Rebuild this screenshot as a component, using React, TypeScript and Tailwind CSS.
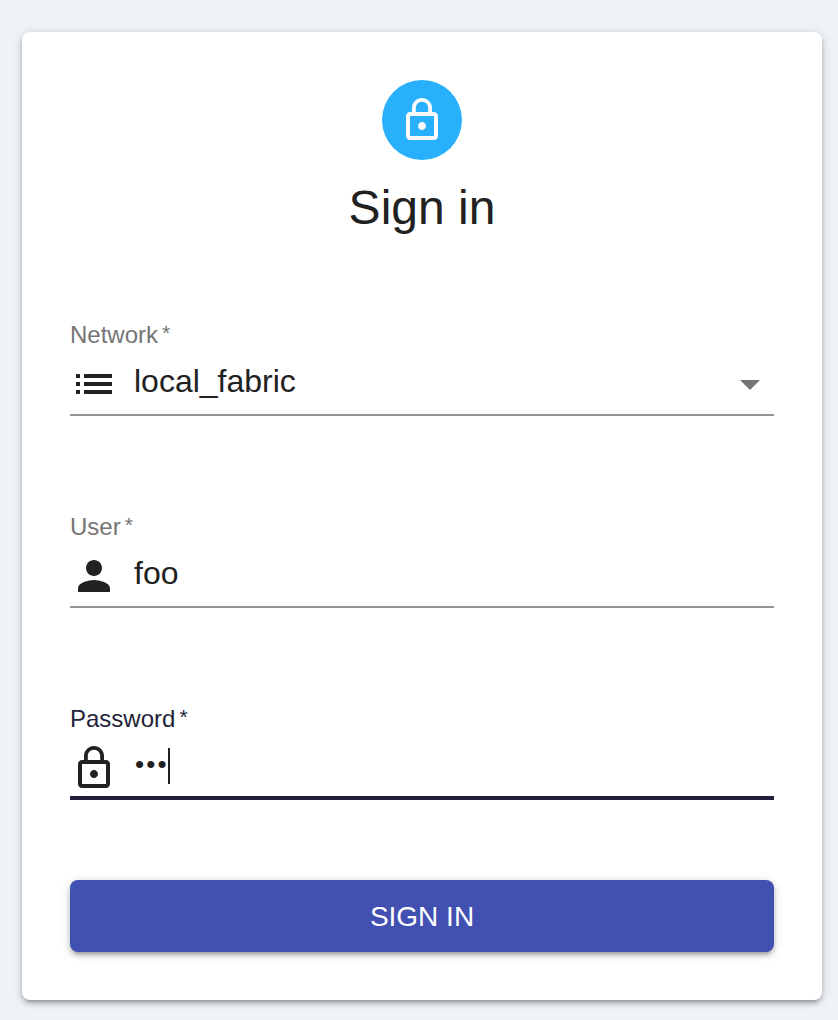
import type { ReactNode } from "react";

const LOCK =
  "M12 17c1.1 0 2-.9 2-2s-.9-2-2-2-2 .9-2 2 .9 2 2 2zm6-9h-1V6c0-2.76-2.24-5-5-5S7 3.24 7 6v2H6c-1.1 0-2 .9-2 2v10c0 1.1.9 2 2 2h12c1.1 0 2-.9 2-2V10c0-1.1-.9-2-2-2zM8.9 6c0-1.71 1.39-3.1 3.1-3.1s3.1 1.39 3.1 3.1v2H8.9V6zM18 20H6V10h12v10z";
const LIST =
  "M3 9h2V7H3v2zm0 4h2v-2H3v2zm0 4h2v-2H3v2zM7 7v2h14V7H7zm0 6h14v-2H7v2zm0 4h14v-2H7v2z";
const PERSON =
  "M12 12c2.21 0 4-1.79 4-4s-1.79-4-4-4-4 1.79-4 4 1.79 4 4 4zm0 2c-2.67 0-8 1.34-8 4v2h16v-2c0-2.66-5.33-4-8-4z";

function Icon({ d, className = "" }: { d: string; className?: string }) {
  return (
    <svg viewBox="0 0 24 24" fill="currentColor" className={`size-12 shrink-0 ${className}`} aria-hidden="true">
      <path d={d} />
    </svg>
  );
}

type FieldProps = {
  label: string;
  icon: string;
  focused?: boolean;
  trailing?: ReactNode;
  children: ReactNode;
};

function Field({ label, icon, focused = false, trailing, children }: FieldProps) {
  return (
    <div
      className={
        focused
          ? "flex h-24 flex-col border-b-4 border-[#231f3a]"
          : "flex h-24 flex-col border-b-2 border-[#949494]"
      }
    >
      <div
        className={
          focused
            ? "flex gap-1 text-2xl leading-[30px] text-[#231f3a]"
            : "flex gap-1 text-2xl leading-[30px] text-[#757575]"
        }
      >
        <span>{label}</span>
        <span className="text-[21px] leading-[26px]">*</span>
      </div>
      <div className="mt-2.5 flex h-12 shrink-0 text-[#212121]">
        <Icon d={icon} />
        <div className="ml-4 flex flex-1 text-[32px] leading-[42px]">{children}</div>
        {trailing}
      </div>
    </div>
  );
}

export default function App() {
  return (
    <div className="h-[1020px] bg-[#eef3f8] px-[22px] pt-8 pr-4 font-['Liberation_Sans',Arial,sans-serif]">
      <main className="flex h-[968px] w-[800px] flex-col rounded-lg bg-white px-12 pt-12 shadow-[0_2px_10px_rgba(0,0,0,0.2),0_4px_4px_rgba(0,0,0,0.14),0_6px_2px_-4px_rgba(0,0,0,0.12)]">
        <div className="flex size-20 items-center justify-center self-center rounded-full bg-[#29b0fc] text-[#fafafa]">
          <Icon d={LOCK} />
        </div>
        <h1 className="mt-4 text-center text-5xl leading-[64px] text-[#212121]">Sign in</h1>
        <form className="mt-20 flex flex-col">
          <div className="flex flex-col gap-24">
            <Field label="Network" icon={LIST} trailing={<Icon d="M7 10l5 5 5-5z" className="text-[#757575]" />}>
              local_fabric
            </Field>
            <Field label="User" icon={PERSON}>
              foo
            </Field>
            <Field label="Password" icon={LOCK} focused>
              <span className="w-[34px] pl-[1.1px] text-[26px] leading-[41px] tracking-[2.1px]">•••</span>
              <span className="mt-1 h-9 w-0.5 bg-[#212121]" />
            </Field>
          </div>
          <button
            type="button"
            className="mt-20 h-[72px] rounded-lg bg-[#4150b1] pt-0.5 text-[28px] leading-[42px] text-white shadow-[0_2px_10px_rgba(0,0,0,0.2),0_4px_4px_rgba(0,0,0,0.14),0_6px_2px_-4px_rgba(0,0,0,0.12)]"
          >
            SIGN IN
          </button>
        </form>
      </main>
    </div>
  );
}
